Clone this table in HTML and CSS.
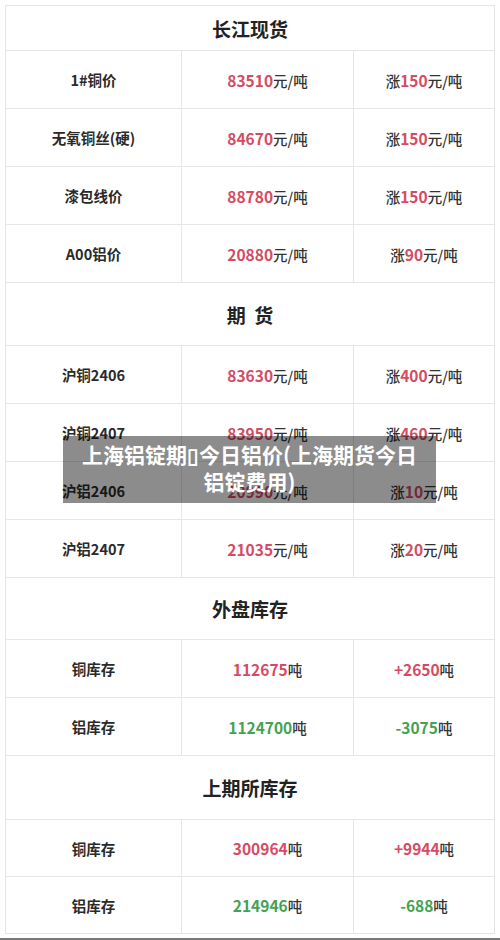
FILE: index.html
```html
<!DOCTYPE html>
<html lang="zh-CN">
<head>
    <meta charset="UTF-8">
    <meta name="viewport" content="width=device-width, initial-scale=1.0">
    <title>上海铝锭期货今日铝价</title>
    <link rel="stylesheet" href="styles.css">
</head>
<body>
    <div class="page">
        <table class="price-table">
            <colgroup>
                <col class="col-name">
                <col class="col-price">
                <col class="col-change">
            </colgroup>
            <tr class="head head-first"><th colspan="3">长江现货</th></tr>
            <tr class="row"><td class="name">1#铜价</td><td><span class="up">83510</span>元/吨</td><td>涨<span class="up">150</span>元/吨</td></tr>
            <tr class="row"><td class="name">无氧铜丝(硬)</td><td><span class="up">84670</span>元/吨</td><td>涨<span class="up">150</span>元/吨</td></tr>
            <tr class="row"><td class="name">漆包线价</td><td><span class="up">88780</span>元/吨</td><td>涨<span class="up">150</span>元/吨</td></tr>
            <tr class="row"><td class="name">A00铝价</td><td><span class="up">20880</span>元/吨</td><td>涨<span class="up">90</span>元/吨</td></tr>

            <tr class="head"><th colspan="3">期&nbsp;&nbsp;货</th></tr>
            <tr class="row"><td class="name">沪铜2406</td><td><span class="up">83630</span>元/吨</td><td>涨<span class="up">400</span>元/吨</td></tr>
            <tr class="row"><td class="name">沪铜2407</td><td><span class="up">83950</span>元/吨</td><td>涨<span class="up">460</span>元/吨</td></tr>
            <tr class="row"><td class="name">沪铝2406</td><td><span class="up">20990</span>元/吨</td><td>涨<span class="up">10</span>元/吨</td></tr>
            <tr class="row"><td class="name">沪铝2407</td><td><span class="up">21035</span>元/吨</td><td>涨<span class="up">20</span>元/吨</td></tr>

            <tr class="head head-short"><th colspan="3">外盘库存</th></tr>
            <tr class="row"><td class="name">铜库存</td><td><span class="up">112675</span>吨</td><td><span class="up">+2650</span>吨</td></tr>
            <tr class="row"><td class="name">铝库存</td><td><span class="down">1124700</span>吨</td><td><span class="down">-3075</span>吨</td></tr>

            <tr class="head head-tall"><th colspan="3">上期所库存</th></tr>
            <tr class="row row-last"><td class="name">铜库存</td><td><span class="up">300964</span>吨</td><td><span class="up">+9944</span>吨</td></tr>
            <tr class="row row-last"><td class="name">铝库存</td><td><span class="down">214946</span>吨</td><td><span class="down">-688</span>吨</td></tr>
        </table>

        <div class="caption">上海铝锭期▯今日铝价(上海期货今日<br>铝锭费用)</div>
        <div class="bottom-bar"></div>
    </div>
</body>
</html>
```

FILE: styles.css
```css
body {
    margin: 0;
    background-color: #fff;
    font-family: "Noto Sans CJK SC", "Noto Sans", sans-serif;
    color: #333;
}
.page {
    position: relative;
    width: 500px;
    padding-top: 5px;
}
.price-table {
    margin-left: 5px;
    width: 490px;
    border-collapse: collapse;
    table-layout: fixed;
    border: 1px solid #e2e2e2;
}
.col-name {
    width: 176px;
}
.col-price {
    width: 172px;
}
.price-table th,
.price-table td {
    border: 1px solid #e6e6e6;
    text-align: center;
    vertical-align: middle;
    padding: 0;
}
.head th {
    height: 62px;
    font-size: 19px;
    font-weight: bold;
    color: #222;
}
.head-first th {
    height: 44px;
}
.head-short th {
    height: 61px;
}
.head-tall th {
    height: 63px;
}
.row td {
    height: 57px;
    font-size: 14.5px;
    font-weight: 500;
    color: #333;
}
.row-last td {
    height: 56px;
}
.row td.name {
    font-weight: bold;
    color: #2a2a2a;
}
.up {
    color: #d54b63;
    font-size: 15.5px;
    font-weight: bold;
}
.down {
    color: #45a152;
    font-size: 15.5px;
    font-weight: bold;
}
.caption {
    position: absolute;
    left: 63px;
    top: 436px;
    width: 373px;
    height: 67px;
    box-sizing: border-box;
    padding-top: 5px;
    background-color: rgba(0, 0, 0, 0.45);
    color: #fff;
    font-size: 21px;
    font-weight: bold;
    line-height: 27px;
    text-align: center;
}
.bottom-bar {
    margin-top: 4px;
    height: 3px;
    background-color: #7a7a7a;
}
```
